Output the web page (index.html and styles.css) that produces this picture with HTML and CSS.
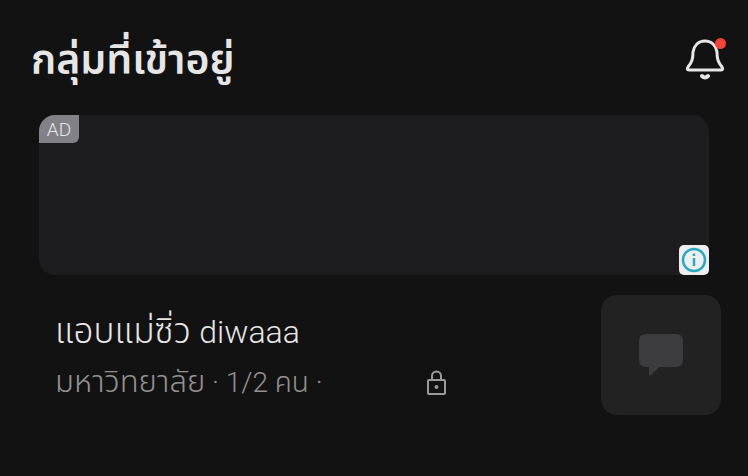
FILE: index.html
```
<!DOCTYPE html>
<html lang="th">
<head>
    <meta charset="utf-8">
    <title>กลุ่มที่เข้าอยู่</title>
    <link rel="stylesheet" href="styles.css">
</head>
<body>
    <header class="topbar">
        <h1 class="title">กลุ่มที่เข้าอยู่</h1>
        <button class="bell" type="button" aria-label="การแจ้งเตือน">
            <svg width="40" height="44" viewBox="0 0 40 44" fill="none" stroke="#e6e6e6" stroke-width="3" stroke-linecap="round" stroke-linejoin="round">
                <path d="M20 3C13 3 9 8 8 14C8 21 7 24 3 29C2 31 2 32 4 32H36C38 32 38 31 37 29C33 24 32 21 32 14C31 8 27 3 20 3Z"/>
                <path d="M17 38Q20 41 23 38" stroke-width="4"/>
            </svg>
            <span class="dot"></span>
        </button>
    </header>

    <!-- Ad slot, still empty -->
    <section class="ad">
        <span class="ad-label">AD</span>
        <button class="ad-info" type="button" aria-label="info">
            <svg width="26" height="26" viewBox="0 0 26 26" fill="none" stroke="#2ba9c4" stroke-width="2.5">
                <circle cx="13" cy="13" r="11"/>
                <path d="M13 11V19M13 6.500V9"/>
            </svg>
        </button>
    </section>

    <!-- One row for each group -->
    <main class="group">
        <div class="group-text">
            <h2 class="group-name">แอบแม่ซิ่ว <span class="latin">diwaaa</span></h2>
            <div class="group-meta">
                <span><span class="place">มหาวิทยาลัย</span> · 1/2 คน ·</span>
                <svg width="20" height="26" viewBox="0 0 20 26" fill="none" stroke="#9a9a9a" stroke-width="2">
                    <rect x="1" y="10" width="17" height="14" rx="1"/>
                    <path d="M5 10V6A4.500 4.500 0 0 1 14 6V10"/>
                    <circle cx="9.500" cy="17" r="2" fill="#9a9a9a" stroke="none"/>
                </svg>
            </div>
        </div>
        <div class="thumb">
            <svg width="46" height="44" viewBox="0 0 46 44" fill="#3c3c3f">
                <path d="M8 1H38Q45 1 45 8V27Q45 34 38 34H21L13 42Q11 43 11 41V34H8Q1 34 1 27V8Q1 1 8 1Z"/>
            </svg>
        </div>
    </main>
</body>
</html>
```
FILE: styles.css
```
body { margin: 0; background-color: #121212; color: #e6e6e6; font-family: Roboto, "Noto Sans Thai", "Noto Sans", sans-serif; }
button { border: 0; padding: 0; background: none; }
h1, h2 { margin: 0; }
.topbar { display: flex; justify-content: space-between; align-items: center; padding: 36px 23px 0 31px; height: 48px; }
.title { font-size: 41px; line-height: 46px; font-weight: 600; white-space: nowrap; }
.bell { position: relative; width: 40px; height: 44px; }
.bell svg { display: block; }
.dot { position: absolute; top: 0; right: -1px; width: 11px; height: 11px; border-radius: 50%; background-color: #f44336; }
.ad { position: relative; height: 160px; margin: 31px 39px 0; border-radius: 16px; background-color: #1d1c1f; }
.ad-label { position: absolute; left: 0; top: 0; width: 40px; line-height: 29px; height: 28px; border-radius: 16px 0 6px 0; background-color: #828187; font-size: 19px; font-weight: 300; text-align: center; }
.ad-info { position: absolute; right: 0; bottom: 0; width: 30px; height: 30px; border-radius: 5px; background-color: #eeeeee; display: flex; align-items: center; justify-content: center; }
.group { display: flex; justify-content: space-between; padding: 20px 27px 0 55px; }
.group-name { font-size: 35px; line-height: 40px; font-weight: 300; margin-top: 17px; white-space: nowrap; }
.latin { font-size: 32px; }
.group-meta { display: flex; justify-content: space-between; align-items: center; width: 392px; margin-top: 10px; color: #929292; font-size: 28px; line-height: 40px; font-weight: 300; white-space: nowrap; }
.place { font-size: 31px; }
.thumb { display: flex; align-items: center; justify-content: center; width: 120px; height: 120px; border-radius: 16px; background-color: #222223; }
```
